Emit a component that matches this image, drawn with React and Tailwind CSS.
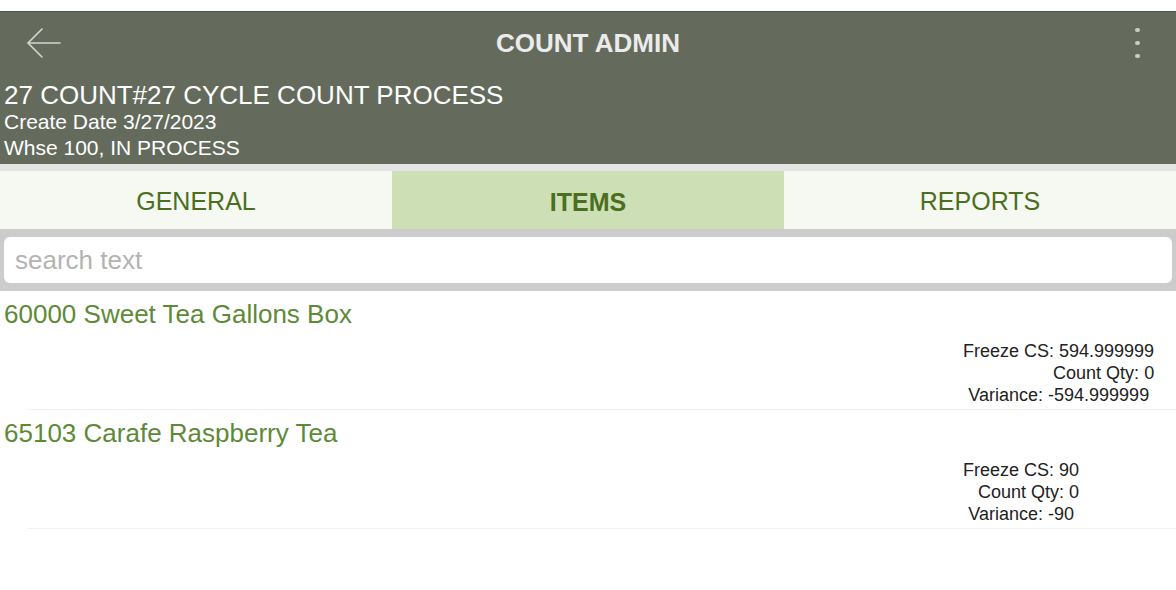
import React from 'react';

const items = [
  { code: '60000', name: 'Sweet Tea Gallons Box', freeze: '594.999999', qty: '0', variance: '-594.999999' },
  { code: '65103', name: 'Carafe Raspberry Tea', freeze: '90', qty: '0', variance: '-90' },
];

const tabs = ['GENERAL', 'ITEMS', 'REPORTS'];

export default function App() {
  return (
    <div className="w-[1176px] h-[590px] bg-white overflow-hidden font-['Liberation_Sans',Arial,sans-serif]">
      <div className="h-[11px] bg-white" />

      {/* Header */}
      <div className="bg-[#646b5c] border-t border-[#4e5447] text-white h-[153px]">
        <div className="relative h-[63px] flex items-center justify-center">
          <svg className="absolute left-[26px] top-[15px]" width="36" height="32" viewBox="0 0 36 32" fill="none" stroke="#d4d6d0" strokeWidth="1.6" strokeLinecap="round">
            <path d="M34 16H3" />
            <path d="M16 2L2 16l14 14" />
          </svg>
          <h1 className="text-[26px] font-bold text-[#ebebeb]">COUNT ADMIN</h1>
          <div className="absolute right-[36px] top-[16px] flex flex-col gap-[9px]">
            <span className="block w-[5px] h-[4px] rounded-full bg-[#c9cbc6]" />
            <span className="block w-[5px] h-[4px] rounded-full bg-[#c9cbc6]" />
            <span className="block w-[5px] h-[4px] rounded-full bg-[#c9cbc6]" />
          </div>
        </div>
        <div className="px-[4px]">
          <div className="text-[26px] leading-[30px] mt-[5px]">27 COUNT#27 CYCLE COUNT PROCESS</div>
          <div className="text-[21px] leading-[26px] mt-[-1px]">Create Date 3/27/2023</div>
          <div className="text-[21px] leading-[26px]">Whse 100, IN PROCESS</div>
        </div>
      </div>

      <div className="h-[7px] bg-[#e4e4e4]" />

      {/* Tabs */}
      <div className="grid grid-cols-3 h-[58px] bg-[#f6f8f2]">
        {tabs.map((t) => (
          <div
            key={t}
            className={`flex items-center justify-center text-[25px] text-[#4c6e21] ${
              t === 'ITEMS' ? 'bg-[#cde0b5] font-bold pt-[6px]' : 'pt-[4px]'
            }`}
          >
            {t}
          </div>
        ))}
      </div>

      {/* Search */}
      <div className="bg-[#cccccc] px-[4px] pt-[8px] pb-[8px]">
        <div className="h-[46px] bg-white rounded-[6px] flex items-center px-[11px] text-[26px] text-[#b3b3b3]">
          search text
        </div>
      </div>

      {/* List */}
      <div>
        {items.map((it) => (
          <div key={it.code} className="relative pt-[8px] pb-[4px]">
            <div className="px-[4px] text-[26px] leading-[30px] text-[#5e8a38]">
              {it.code} {it.name}
            </div>
            <div className="pl-[963px] mt-[11px]">
              <div className="inline-flex flex-col items-end text-[18px] leading-[22px] text-[#222222]">
                <span>Freeze CS: {it.freeze}</span>
                <span>Count Qty: {it.qty}</span>
                <span className="pr-[5px]">Variance: {it.variance}</span>
              </div>
            </div>
            <div className="absolute bottom-0 left-[27px] right-0 h-px bg-[#f3f3f3]" />
          </div>
        ))}
      </div>
    </div>
  );
}
